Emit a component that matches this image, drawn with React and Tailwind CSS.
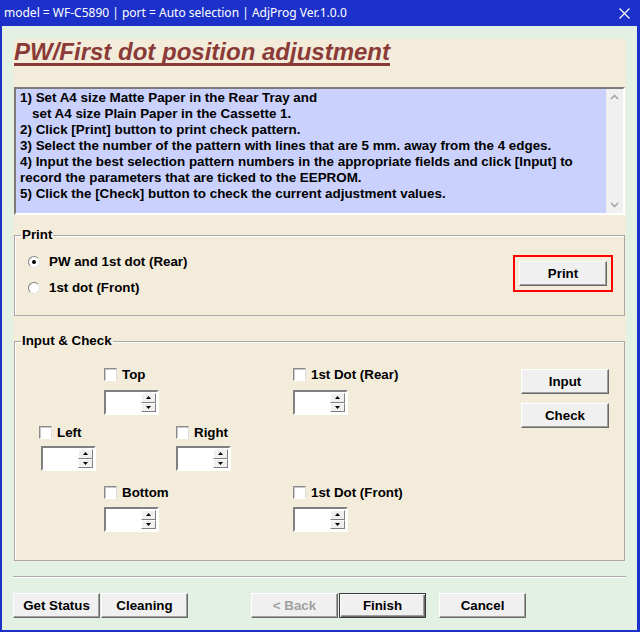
import React from 'react';

const raised =
  'bg-[#f0f0f0] border border-t-white border-l-white border-r-[#696969] border-b-[#696969] shadow-[inset_-1px_-1px_0_#a0a0a0]';

function WinButton({ children, className = '', disabled, isDefault }) {
  return (
    <button
      className={`h-[25px] flex items-center justify-center text-[13.33px] font-bold ${
        isDefault
          ? 'bg-[#f0f0f0] border border-[#3c3c3c] shadow-[inset_1px_1px_0_#fff,inset_-1px_-1px_0_#696969,inset_-2px_-2px_0_#a0a0a0]'
          : raised
      } ${disabled ? 'text-[#a0a0a0]' : 'text-black'} ${className}`}
    >
      {children}
    </button>
  );
}

function Checkbox({ label }) {
  return (
    <div className="flex items-center h-[13px]">
      <div className="w-[13px] h-[13px] bg-white border border-t-[#8a8a8a] border-l-[#8a8a8a] border-r-[#dcdcdc] border-b-white shadow-[inset_1px_1px_0_#c8c8c8]" />
      <span className="ml-[5px] text-[13.33px] font-bold leading-[16px]">{label}</span>
    </div>
  );
}

function SpinButton({ up }) {
  return (
    <div className="flex-1 flex items-center justify-center bg-[#f0f0f0] border border-t-white border-l-white border-r-[#808080] border-b-[#808080]">
      <svg width="5" height="3" viewBox="0 0 5 3">
        {up ? <polygon points="2.5,0 5,3 0,3" fill="#000" /> : <polygon points="0,0 5,0 2.5,3" fill="#000" />}
      </svg>
    </div>
  );
}

function Spin({ className = '' }) {
  return (
    <div
      className={`flex w-[55px] h-[25px] bg-white border-2 border-t-[#808080] border-l-[#808080] border-r-white border-b-white ${className}`}
    >
      <div className="flex-1 bg-white" />
      <div className="flex flex-col w-[16px] py-[1px] pr-[1px]">
        <SpinButton up />
        <SpinButton />
      </div>
    </div>
  );
}

function Radio({ checked, label }) {
  return (
    <div className="flex items-center h-[16px]">
      <div className="w-[12px] h-[12px] rounded-full bg-white border-[1.5px] border-t-[#808080] border-l-[#808080] border-r-[#e4e4e4] border-b-[#e4e4e4] flex items-center justify-center">
        {checked && <div className="w-[4px] h-[4px] rounded-full bg-black" />}
      </div>
      <span className="ml-[9px] text-[13.33px] font-bold">{label}</span>
    </div>
  );
}

function Chevron({ down }) {
  return (
    <svg width="9" height="6" viewBox="0 0 9 6">
      <polyline
        points={down ? '1,1 4.5,4.5 8,1' : '1,5 4.5,1.5 8,5'}
        fill="none"
        stroke="#a6a6a6"
        strokeWidth="1.6"
      />
    </svg>
  );
}

export default function App() {
  return (
    <div
      className="w-[640px] h-[632px] bg-[#1b31c9] flex flex-col text-black"
      style={{ fontFamily: '"Liberation Sans", Arial, sans-serif' }}
    >
      {/* Title bar */}
      <div className="h-[26px] flex items-center justify-between pl-[4px] pr-[10px] text-white">
        <span className="text-[12px]" style={{ fontFamily: '"Noto Sans", sans-serif' }}>
          model = WF-C5890 | port = Auto selection | AdjProg Ver.1.0.0
        </span>
        <svg width="11" height="11" viewBox="0 0 11 11">
          <path d="M0.5 0.5 L10.5 10.5 M10.5 0.5 L0.5 10.5" stroke="#fff" strokeWidth="1.2" />
        </svg>
      </div>

      {/* Body */}
      <div className="flex-1 ml-[2px] mr-[3px] mb-[2px] bg-[#e2f1e3] px-[11px] pt-[13px] flex flex-col">
        <div className="bg-[#f3ecda] px-[1px] pb-[1px] flex flex-col">
          <div className="h-[26px] leading-[26px]">
            <span className="text-[24px] font-bold italic text-[#8b3b37] underline decoration-[3px] underline-offset-[3px] [text-decoration-skip-ink:none]">
              PW/First dot position adjustment
            </span>
          </div>

          {/* Instructions */}
          <div className="mt-[22px] h-[128px] flex bg-[#c9d1fc] border-2 border-t-[#7a7a7a] border-l-[#7a7a7a] border-r-white border-b-white">
            <div className="flex-1 pl-[4px] pt-[1px] text-[13.4px] font-bold leading-[16px]">
              <div>1) Set A4 size Matte Paper in the Rear Tray and</div>
              <div className="pl-[12px]">set A4 size Plain Paper in the Cassette 1.</div>
              <div>2) Click [Print] button to print check pattern.</div>
              <div>3) Select the number of the pattern with lines that are 5 mm. away from the 4 edges.</div>
              <div>4) Input the best selection pattern numbers in the appropriate fields and click [Input] to</div>
              <div>record the parameters that are ticked to the EEPROM.</div>
              <div>5) Click the [Check] button to check the current adjustment values.</div>
            </div>
            <div className="w-[17px] bg-[#f0f0f0] flex flex-col justify-between items-center py-[5px]">
              <Chevron />
              <Chevron down />
            </div>
          </div>

          {/* Print group */}
          <fieldset className="mt-[12px] h-[89px] border border-[#a8a8a8] shadow-[inset_1px_1px_0_#fff]">
            <legend className="ml-[6px] px-[1px] text-[13.33px] font-bold leading-[16px]">Print</legend>
            <div className="flex justify-between items-start">
              <div className="pl-[13px] pt-[11px] flex flex-col gap-[10px]">
                <Radio checked label="PW and 1st dot (Rear)" />
                <Radio label="1st dot (Front)" />
              </div>
              <div className="mt-[12px] mr-[11px] border-2 border-[#ff0000] px-[4px] py-[4px]">
                <WinButton className="w-[88px]">Print</WinButton>
              </div>
            </div>
          </fieldset>

          {/* Input & Check group */}
          <fieldset className="mt-[17px] h-[228px] border border-[#a8a8a8] shadow-[inset_1px_1px_0_#fff]">
            <legend className="ml-[6px] px-[1px] text-[13.33px] font-bold leading-[16px]">Input &amp; Check</legend>
            <div className="flex justify-between items-start">
              <div className="flex flex-col pt-[19px]">
                <div className="flex pl-[89px]">
                  <div className="w-[189px] flex flex-col">
                    <Checkbox label="Top" />
                    <Spin className="mt-[9px]" />
                  </div>
                  <div className="flex flex-col">
                    <Checkbox label="1st Dot (Rear)" />
                    <Spin className="mt-[9px]" />
                  </div>
                </div>
                <div className="flex pl-[24px] mt-[11px]">
                  <div className="w-[137px] flex flex-col">
                    <Checkbox label="Left" />
                    <Spin className="mt-[7px] ml-[2px]" />
                  </div>
                  <div className="flex flex-col">
                    <Checkbox label="Right" />
                    <Spin className="mt-[7px]" />
                  </div>
                </div>
                <div className="flex pl-[89px] mt-[15px]">
                  <div className="w-[189px] flex flex-col">
                    <Checkbox label="Bottom" />
                    <Spin className="mt-[8px]" />
                  </div>
                  <div className="flex flex-col">
                    <Checkbox label="1st Dot (Front)" />
                    <Spin className="mt-[8px]" />
                  </div>
                </div>
              </div>
              <div className="pt-[20px] mr-[15px] flex flex-col gap-[9px]">
                <WinButton className="w-[88px]">Input</WinButton>
                <WinButton className="w-[88px]">Check</WinButton>
              </div>
            </div>
          </fieldset>
        </div>

        {/* Separator */}
        <div className="mt-[14px] h-[2px] border-t border-t-[#a8a8a8] border-b border-b-white" />

        {/* Bottom buttons */}
        <div className="mt-[15px] flex">
          <WinButton className="w-[87px]">Get Status</WinButton>
          <WinButton className="w-[87px] ml-[1px]">Cleaning</WinButton>
          <WinButton className="w-[87px] ml-[63px]" disabled>
            &lt; Back
          </WinButton>
          <WinButton className="w-[87px] ml-[1px]" isDefault>
            Finish
          </WinButton>
          <WinButton className="w-[87px] ml-[13px]">Cancel</WinButton>
        </div>
      </div>
    </div>
  );
}
